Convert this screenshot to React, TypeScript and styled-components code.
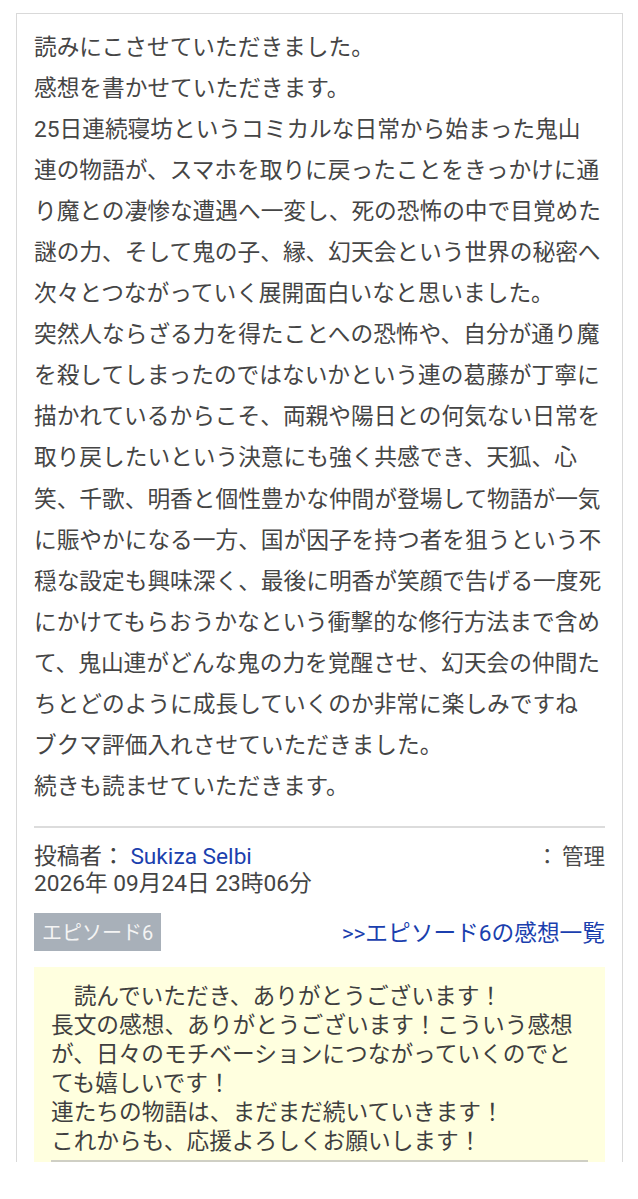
import React from "react";
import styled, { createGlobalStyle } from "styled-components";

const Global = createGlobalStyle`
  html, body { margin: 0; padding: 0; background: #ffffff; }
  body { font-family: Roboto, "Noto Sans CJK JP", sans-serif; color: #444444; }
`;

const Page = styled.div`
  padding: 13px 16px 0 16px;
  width: 607px;
`;

const Card = styled.section`
  border: 1px solid #d9d9d9;
  border-bottom: none;
  padding: 0 17px;
  background: #ffffff;
`;

const Body = styled.p`
  margin: 0;
  padding-top: 12.5px;
  font-size: 22.7px;
  line-height: 41.1px;
  white-space: nowrap;
  color: #454545;
`;

const Rule = styled.hr<{ $color?: string; $top: number }>`
  border: none;
  height: 2px;
  margin: ${(p) => p.$top}px 0 0 0;
  background: ${(p) => p.$color ?? "#dcdcdc"};
`;

const Meta = styled.div`
  margin-top: 15.5px;
  font-size: 22.7px;
  line-height: 27px;
  color: #444444;
`;

const MetaRow = styled.div`
  display: flex;
  justify-content: space-between;
  align-items: baseline;
`;

const Author = styled.a`
  color: #1b3fae;
  text-decoration: none;
`;

const Admin = styled.span`
  display: inline-flex;
  gap: 4px;
  font-size: 21.5px;
  color: #4a4a4a;
`;

const EpisodeRow = styled.div`
  margin-top: 15.5px;
  display: flex;
  justify-content: space-between;
  align-items: center;
`;

const Badge = styled.span`
  display: inline-flex;
  align-items: center;
  height: 38px;
  padding: 0 8px;
  background: #a8b0b9;
  color: #f4f4f4;
  font-size: 20px;
`;

const ListLink = styled.a`
  color: #1b3fae;
  text-decoration: none;
  font-size: 22.7px;
`;

const Reply = styled.div`
  margin-top: 16px;
  background: #ffffdf;
  padding: 15px 17px 0 17px;
`;

const ReplyText = styled.p`
  margin: 0;
  font-size: 22.7px;
  line-height: 29px;
  white-space: nowrap;
  color: #3f3f3f;
`;

const bodyLines = [
  "読みにこさせていただきました。",
  "感想を書かせていただきます。",
  "25日連続寝坊というコミカルな日常から始まった鬼山",
  "連の物語が、スマホを取りに戻ったことをきっかけに通",
  "り魔との凄惨な遭遇へ一変し、死の恐怖の中で目覚めた",
  "謎の力、そして鬼の子、縁、幻天会という世界の秘密へ",
  "次々とつながっていく展開面白いなと思いました。",
  "突然人ならざる力を得たことへの恐怖や、自分が通り魔",
  "を殺してしまったのではないかという連の葛藤が丁寧に",
  "描かれているからこそ、両親や陽日との何気ない日常を",
  "取り戻したいという決意にも強く共感でき、天狐、心",
  "笑、千歌、明香と個性豊かな仲間が登場して物語が一気",
  "に賑やかになる一方、国が因子を持つ者を狙うという不",
  "穏な設定も興味深く、最後に明香が笑顔で告げる一度死",
  "にかけてもらおうかなという衝撃的な修行方法まで含め",
  "て、鬼山連がどんな鬼の力を覚醒させ、幻天会の仲間た",
  "ちとどのように成長していくのか非常に楽しみですね",
  "ブクマ評価入れさせていただきました。",
  "続きも読ませていただきます。",
];

const replyLines = [
  "\u3000読んでいただき、ありがとうございます！",
  "長文の感想、ありがとうございます！こういう感想",
  "が、日々のモチベーションにつながっていくのでと",
  "ても嬉しいです！",
  "連たちの物語は、まだまだ続いていきます！",
  "これからも、応援よろしくお願いします！",
];

const withBreaks = (lines: string[]) =>
  lines.map((l, i) => (
    <React.Fragment key={i}>
      {l}
      {i < lines.length - 1 && <br />}
    </React.Fragment>
  ));

export default function App() {
  return (
    <>
      <Global />
      <Page>
        <Card>
          <Body>{withBreaks(bodyLines)}</Body>
          <Rule $top={18.5} />
          <Meta>
            <MetaRow>
              <span>
                投稿者： <Author href="#">Sukiza Selbi</Author>
              </span>
              <Admin>
                <span>：</span>
                <span>管理</span>
              </Admin>
            </MetaRow>
            <div>2026年 09月24日 23時06分</div>
          </Meta>
          <EpisodeRow>
            <Badge>エピソード6</Badge>
            <ListLink href="#">&gt;&gt;エピソード6の感想一覧</ListLink>
          </EpisodeRow>
          <Reply>
            <ReplyText>{withBreaks(replyLines)}</ReplyText>
            <Rule $top={4} $color="#cfcfc4" />
          </Reply>
        </Card>
      </Page>
    </>
  );
}
